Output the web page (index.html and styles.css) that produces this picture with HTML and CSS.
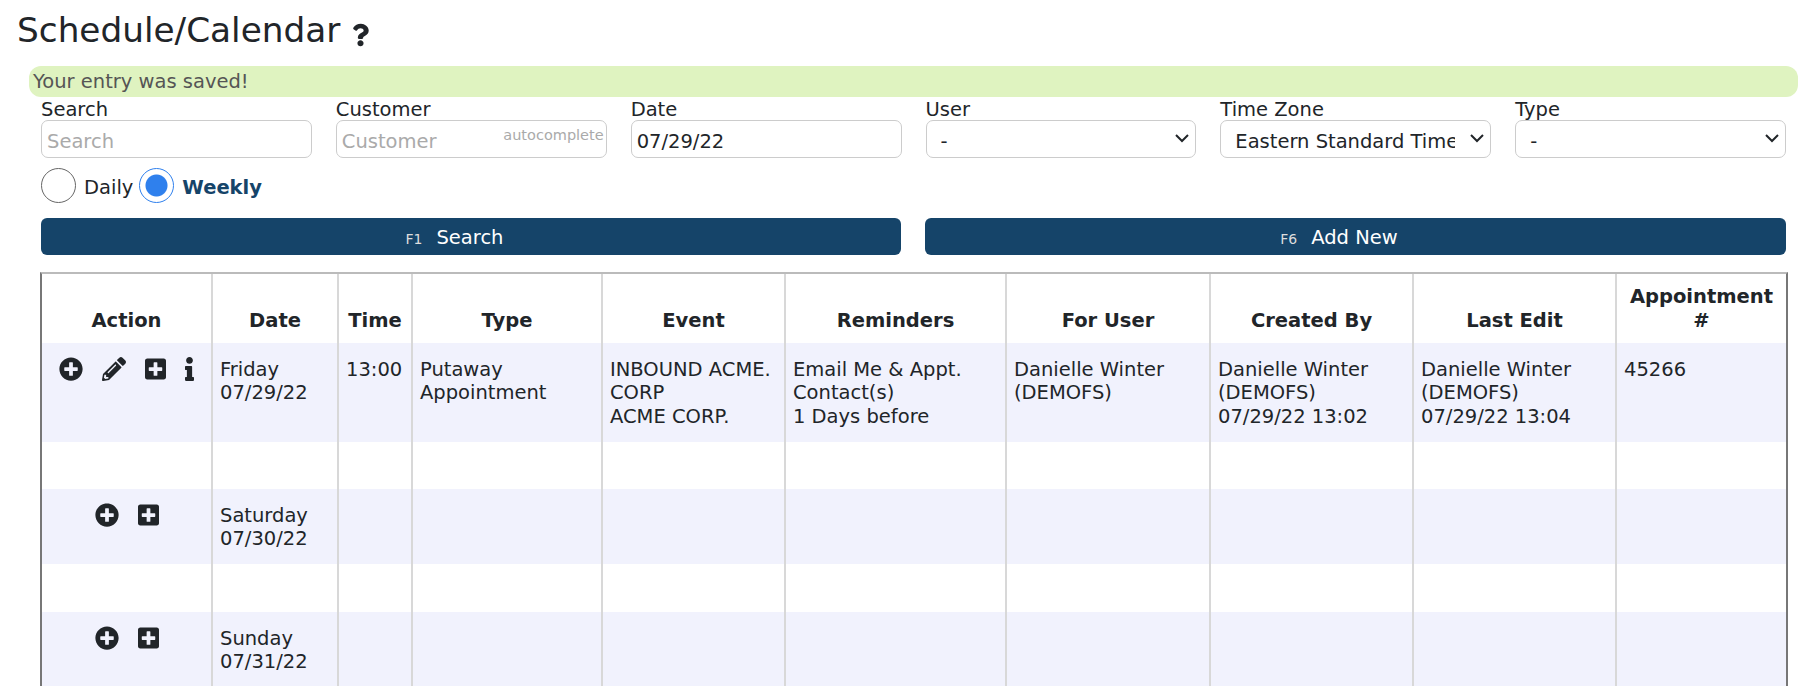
FILE: index.html
```html
<!DOCTYPE html>
<html lang="en">
<head>
<meta charset="utf-8">
<title>Schedule/Calendar</title>
<link rel="stylesheet" href="styles.css">
</head>
<body>
<svg class="defs" aria-hidden="true">
  <symbol id="i-circle" viewBox="0 0 512 512"><path d="M256 8C119 8 8 119 8 256s111 248 248 248 248-111 248-248S393 8 256 8zm144 276c0 6.6-5.4 12-12 12h-92v92c0 6.6-5.4 12-12 12h-56c-6.6 0-12-5.4-12-12v-92h-92c-6.6 0-12-5.4-12-12v-56c0-6.6 5.4-12 12-12h92v-92c0-6.6 5.4-12 12-12h56c6.6 0 12 5.4 12 12v92h92c6.6 0 12 5.4 12 12v56z"/></symbol>
  <symbol id="i-square" viewBox="0 0 448 512"><path d="M400 32H48C21.5 32 0 53.5 0 80v352c0 26.5 21.5 48 48 48h352c26.5 0 48-21.5 48-48V80c0-26.5-21.5-48-48-48zm-32 252c0 6.6-5.4 12-12 12h-92v92c0 6.6-5.4 12-12 12h-56c-6.6 0-12-5.4-12-12v-92H92c-6.6 0-12-5.4-12-12v-56c0-6.6 5.4-12 12-12h92v-92c0-6.6 5.4-12 12-12h56c6.6 0 12 5.4 12 12v92h92c6.6 0 12 5.4 12 12v56z"/></symbol>
  <symbol id="i-pencil" viewBox="0 0 512 512"><path d="M497.9 142.1l-46.1 46.1c-4.7 4.7-12.3 4.7-17 0l-111-111c-4.7-4.7-4.7-12.3 0-17l46.1-46.1c18.7-18.7 49.1-18.7 67.9 0l60.1 60.1c18.8 18.7 18.8 49.1 0 67.9zM284.2 99.8L21.6 362.4.4 483.9c-2.9 16.4 11.4 30.6 27.8 27.8l121.5-21.3 262.6-262.6c4.7-4.7 4.7-12.3 0-17l-111-111c-4.8-4.7-12.4-4.7-17.1 0zM124.1 339.9c-5.5-5.5-5.5-14.3 0-19.8l154-154c5.5-5.5 14.3-5.5 19.8 0s5.5 14.3 0 19.8l-154 154c-5.5 5.5-14.3 5.5-19.8 0zM88 424h48v36.3l-64.5 11.3-31.1-31.1L51.7 376H88v48z"/></symbol>
  <symbol id="i-info" viewBox="0 0 192 512"><path d="M20 424.229h20V279.771H20c-11.046 0-20-8.954-20-20V212c0-11.046 8.954-20 20-20h112c11.046 0 20 8.954 20 20v212.229h20c11.046 0 20 8.954 20 20V492c0 11.046-8.954 20-20 20H20c-11.046 0-20-8.954-20-20v-47.771c0-11.046 8.954-20 20-20zM96 0C56.235 0 24 32.235 24 72s32.235 72 72 72 72-32.235 72-72S135.764 0 96 0z"/></symbol>
  <symbol id="i-question" viewBox="0 0 384 512"><path d="M202.021 0C122.202 0 70.503 32.703 29.914 91.026c-7.363 10.58-5.093 25.086 5.178 32.874l43.138 32.709c10.373 7.865 25.132 6.026 33.253-4.148 25.049-31.381 43.63-49.449 82.757-49.449 30.764 0 68.816 19.799 68.816 49.631 0 22.552-18.617 34.134-48.993 51.164-35.423 19.86-82.299 44.576-82.299 106.405V320c0 13.255 10.745 24 24 24h72.471c13.255 0 24-10.745 24-24v-5.773c0-42.86 125.268-44.645 125.268-160.627C377.504 66.256 286.902 0 202.021 0zM192 373.459c-38.196 0-69.271 31.075-69.271 69.271 0 38.195 31.075 69.27 69.271 69.27s69.271-31.075 69.271-69.271-31.075-69.27-69.271-69.27z"/></symbol>
</svg>

<h1 class="title">Schedule/Calendar <svg class="help"><use href="#i-question"/></svg></h1>
<div class="alert">Your entry was saved!</div>

<main class="content">
  <form class="filters">
    <div class="field"><label>Search</label><input class="control" placeholder="Search"></div>
    <div class="field"><label>Customer</label>
      <div class="auto"><input class="control" placeholder="Customer"><span class="auto-tag">autocomplete</span></div>
    </div>
    <div class="field"><label>Date</label><input class="control" value="07/29/22"></div>
    <div class="field"><label>User</label><div class="select"><span class="select-text">-</span><svg class="chev" viewBox="0 0 16 16"><path d="M2 5l6 6 6-6"/></svg></div></div>
    <div class="field"><label>Time Zone</label><div class="select"><span class="select-text">Eastern Standard Time</span><svg class="chev" viewBox="0 0 16 16"><path d="M2 5l6 6 6-6"/></svg></div></div>
    <div class="field"><label>Type</label><div class="select"><span class="select-text">-</span><svg class="chev" viewBox="0 0 16 16"><path d="M2 5l6 6 6-6"/></svg></div></div>
  </form>

  <div class="mode">
    <span class="radio"></span><span class="mode-label">Daily</span>
    <span class="radio on"></span><span class="mode-label active">Weekly</span>
  </div>

  <div class="actions">
    <button type="button" class="btn"><small>F1</small>Search</button>
    <button type="button" class="btn"><small>F6</small>Add New</button>
  </div>

  <table class="grid">
    <colgroup>
      <col class="c1"><col class="c2"><col class="c3"><col class="c4"><col class="c5"><col class="c6"><col class="c7"><col class="c8"><col class="c9"><col class="c10">
    </colgroup>
    <thead>
      <tr><th>Action</th><th>Date</th><th>Time</th><th>Type</th><th>Event</th><th>Reminders</th><th>For User</th><th>Created By</th><th>Last Edit</th><th>Appointment #</th></tr>
    </thead>
    <tbody>
      <tr class="shade tall">
        <td class="acts"><span class="icons four"><svg class="ic"><use href="#i-circle"/></svg><svg class="ic"><use href="#i-pencil"/></svg><svg class="ic sq"><use href="#i-square"/></svg><svg class="ic inf"><use href="#i-info"/></svg></span></td>
        <td>Friday<br>07/29/22</td><td>13:00</td><td>Putaway<br>Appointment</td>
        <td>INBOUND ACME. CORP<br>ACME CORP.</td><td>Email Me &amp; Appt. Contact(s)<br>1 Days before</td>
        <td>Danielle Winter (DEMOFS)</td><td>Danielle Winter (DEMOFS)<br>07/29/22 13:02</td><td>Danielle Winter (DEMOFS)<br>07/29/22 13:04</td><td>45266</td>
      </tr>
      <tr class="gap"><td></td><td></td><td></td><td></td><td></td><td></td><td></td><td></td><td></td><td></td></tr>
      <tr class="shade">
        <td class="acts"><span class="icons"><svg class="ic"><use href="#i-circle"/></svg><svg class="ic sq"><use href="#i-square"/></svg></span></td>
        <td>Saturday<br>07/30/22</td><td></td><td></td><td></td><td></td><td></td><td></td><td></td><td></td>
      </tr>
      <tr class="gap"><td></td><td></td><td></td><td></td><td></td><td></td><td></td><td></td><td></td><td></td></tr>
      <tr class="shade">
        <td class="acts"><span class="icons"><svg class="ic"><use href="#i-circle"/></svg><svg class="ic sq"><use href="#i-square"/></svg></span></td>
        <td>Sunday<br>07/31/22</td><td></td><td></td><td></td><td></td><td></td><td></td><td></td><td></td>
      </tr>
    </tbody>
  </table>
</main>
</body>
</html>
```

FILE: styles.css
```css
html, body { margin: 0; height: 686px; overflow: hidden; background: #fff; }
body { font-family: "DejaVu Sans", Verdana, sans-serif; font-size: 19.5px; line-height: 23.4px; color: #212529; }
.defs { display: none; }

.title { margin: 0; padding: 6px 0 0 17px; height: 66px; box-sizing: border-box; font-size: 34.3px; line-height: 48px; font-weight: 400; white-space: nowrap; }
.help { width: 17px; height: 24px; margin-left: 1px; vertical-align: -5px; fill: #212529; }

.alert { margin: 0 21px 0 29px; height: 31px; padding-left: 4px; border-radius: 12px; background: #dff3c0; color: #555; line-height: 32px; }

.content { padding: 0 33px 0 41px; }

.filters { display: grid; grid-template-columns: repeat(6, minmax(0, 1fr)); column-gap: 24px; }
.field { min-width: 0; }
.field label { display: block; height: 23px; line-height: 25px; }
.control { width: 100%; height: 38px; box-sizing: border-box; padding: 4px 5px 0; border: 1px solid #ccc; border-radius: 7px; font: inherit; color: #212529; background: #fff; outline: none; }
.control::placeholder { color: #aaa; opacity: 1; }
.auto { position: relative; }
.auto-tag { position: absolute; top: 6px; right: 3px; font-size: 14.5px; line-height: 18px; color: #aaa; }
.select { display: flex; align-items: center; height: 38px; box-sizing: border-box; padding: 6px 5px 0 14px; border: 1px solid #ccc; border-radius: 7px; background: #fff; }
.select-text { flex: 1; min-width: 0; overflow: hidden; white-space: nowrap; }
.chev { flex: none; width: 16px; height: 16px; margin-left: 14px; margin-top: -8px; fill: none; stroke: #212529; stroke-width: 2; }

.mode { display: flex; align-items: center; margin-top: 10px; height: 35px; }
.radio { width: 35px; height: 35px; box-sizing: border-box; border: 1px solid #666; border-radius: 50%; background: #fff; }
.radio.on { border: 1.5px solid #2f80ed; background: radial-gradient(circle, #2f80ed 0 10.5px, #fff 11.5px); }
.mode-label { margin: 0 6px 0 8px; padding-top: 5px; }
.mode-label.active { color: #154469; font-weight: 700; }

.actions { display: grid; grid-template-columns: 860px minmax(0, 1fr); column-gap: 24px; margin-top: 15px; }
.btn { height: 37px; padding: 4px 33px 0 0; border: 0; border-radius: 6px; background: #154469; color: #fff; font: inherit; }
.btn small { margin-right: 14px; font-size: 14px; color: #ddd; }

.grid { width: 1748px; margin: 17px 0 0 -1px; table-layout: fixed; border-collapse: separate; border-spacing: 0; border: 2px solid #777; border-bottom: 0; border-top-color: #bbb; }
.c1 { width: 169px; } .c2 { width: 126px; } .c3 { width: 74px; } .c4 { width: 190px; } .c5 { width: 183px; }
.c6 { width: 221px; } .c7 { width: 204px; } .c8 { width: 203px; } .c9 { width: 203px; } .c10 { width: 171px; }

th { height: 69px; box-sizing: border-box; padding: 0 8px 11px; vertical-align: bottom; text-align: center; font-weight: 700; border-left: 2px solid #d8d8d8; }
td { padding: 15px 7px 0; vertical-align: top; border-left: 2px solid #d8d8d8; }
th:first-child, td:first-child { border-left: 0; }
tr.shade td { height: 75px; box-sizing: border-box; background: #f1f2fd; }
tr.shade.tall td { height: 99px; }
tr.gap td { height: 48px; box-sizing: border-box; padding: 0; }
tr.shade.tall + tr.gap td { height: 47px; }

.acts { text-align: center; }
.icons { display: inline-flex; gap: 19px; align-items: flex-start; margin-top: -1px; }
.ic { width: 24px; height: 24px; fill: #212529; }
.ic.sq { width: 21px; }
.ic.inf { width: 9px; }
```
